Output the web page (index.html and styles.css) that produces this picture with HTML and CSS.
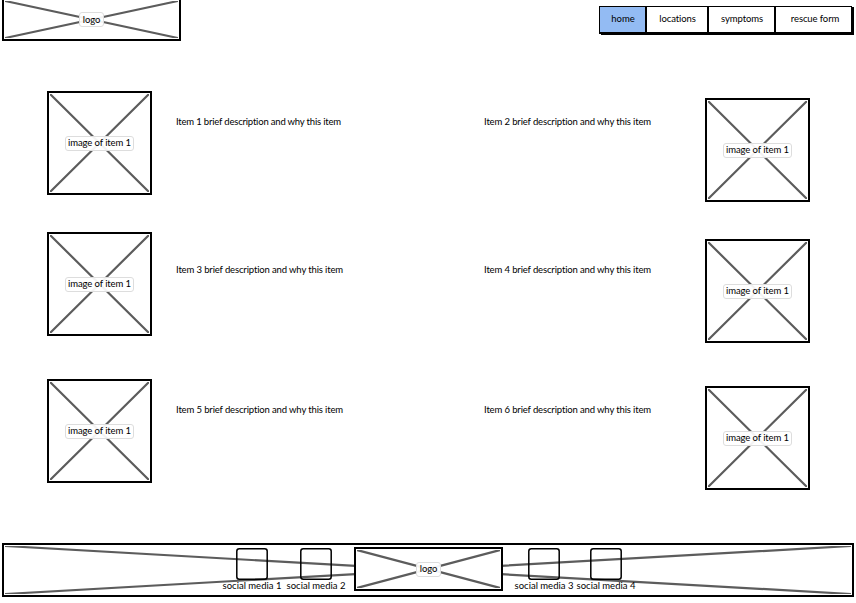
FILE: index.html
```
<!DOCTYPE html>
<html lang="en">
<head>
<meta charset="utf-8">
<title>Home</title>
<link rel="stylesheet" href="styles.css">
</head>
<body>
<header class="top">
  <div class="frame brand"><svg class="cross" viewBox="0 0 100 100" preserveAspectRatio="none"><path d="M0 0L100 100M100 0L0 100"/></svg><span class="tag logo-tag">logo</span></div>
  <nav class="nav">
    <a class="tab home active"><span>home</span></a>
    <a class="tab locations"><span>locations</span></a>
    <a class="tab symptoms"><span>symptoms</span></a>
    <a class="tab rescue"><span>rescue form</span></a>
  </nav>
</header>
<main class="items">
  <section class="row first">
    <div class="frame photo"><svg class="cross" viewBox="0 0 100 100" preserveAspectRatio="none"><path d="M0 0L100 100M100 0L0 100"/></svg><span class="tag">image of item 1</span></div>
    <p class="desc one">Item 1 brief description and why this item</p>
    <p class="desc right">Item 2 brief description and why this item</p>
    <div class="frame photo low"><svg class="cross" viewBox="0 0 100 100" preserveAspectRatio="none"><path d="M0 0L100 100M100 0L0 100"/></svg><span class="tag">image of item 1</span></div>
  </section>
  <section class="row second">
    <div class="frame photo"><svg class="cross" viewBox="0 0 100 100" preserveAspectRatio="none"><path d="M0 0L100 100M100 0L0 100"/></svg><span class="tag">image of item 1</span></div>
    <p class="desc">Item 3 brief description and why this item</p>
    <p class="desc right">Item 4 brief description and why this item</p>
    <div class="frame photo low"><svg class="cross" viewBox="0 0 100 100" preserveAspectRatio="none"><path d="M0 0L100 100M100 0L0 100"/></svg><span class="tag">image of item 1</span></div>
  </section>
  <section class="row third">
    <div class="frame photo"><svg class="cross" viewBox="0 0 100 100" preserveAspectRatio="none"><path d="M0 0L100 100M100 0L0 100"/></svg><span class="tag">image of item 1</span></div>
    <p class="desc">Item 5 brief description and why this item</p>
    <p class="desc right">Item 6 brief description and why this item</p>
    <div class="frame photo low"><svg class="cross" viewBox="0 0 100 100" preserveAspectRatio="none"><path d="M0 0L100 100M100 0L0 100"/></svg><span class="tag">image of item 1</span></div>
  </section>
</main>
<footer class="frame bottom">
  <svg class="cross" viewBox="0 0 100 100" preserveAspectRatio="none"><path d="M0 0L100 100M100 0L0 100"/></svg>
  <div class="social"><svg class="box" viewBox="0 0 32 32"><rect x=".8" y=".8" width="30.4" height="30.4" rx="2.5"/></svg><span>social media 1</span></div>
  <div class="social"><svg class="box" viewBox="0 0 32 32"><rect x=".8" y=".8" width="30.4" height="30.4" rx="2.5"/></svg><span>social media 2</span></div>
  <div class="frame foot-logo"><svg class="cross" viewBox="0 0 100 100" preserveAspectRatio="none"><path d="M0 0L100 100M100 0L0 100"/></svg><span class="tag logo-tag">logo</span></div>
  <div class="social"><svg class="box" viewBox="0 0 32 32"><rect x=".8" y=".8" width="30.4" height="30.4" rx="2.5"/></svg><span>social media 3</span></div>
  <div class="social last"><svg class="box" viewBox="0 0 32 32"><rect x=".8" y=".8" width="30.4" height="30.4" rx="2.5"/></svg><span>social media 4</span></div>
</footer>
</body>
</html>
```
FILE: styles.css
```
* { box-sizing: border-box; }
body {
  margin: 0;
  width: 856px;
  height: 603px;
  overflow: hidden;
  background: #fff;
  color: #000;
  font: 9.5px/12px Lato, sans-serif;
  white-space: nowrap;
}
.frame {
  position: relative;
  display: flex;
  align-items: center;
  justify-content: center;
  border: 2px solid #000;
  background: #fff;
}
/* Diagonals of a picture placeholder, behind its contents */
.cross {
  position: absolute;
  inset: 1px;
  width: calc(100% - 2px);
  height: calc(100% - 2px);
}
.cross path {
  fill: none;
  stroke: #5c5c5c;
  stroke-width: 2.2px;
  vector-effect: non-scaling-stroke;
}
.tag {
  position: relative;
  display: flex;
  align-items: center;
  justify-content: center;
  width: 69px;
  height: 15px;
  border: 1px solid #ddd;
  border-radius: 3px;
  background: rgba(255, 255, 255, .93);
  letter-spacing: -.1px;
}
.logo-tag { width: 25px; }
.top {
  display: flex;
  justify-content: space-between;
  height: 91px;
  padding: 0 4px 0 2px;
}
.brand { width: 179px; height: 43px; margin-top: -2px; }
.nav {
  display: flex;
  height: 28px;
  margin-top: 6px;
  border: 1px solid #000;
  border-bottom-width: 2px;
  box-shadow: 2px 1px 0 #000;
}
.tab {
  display: flex;
  align-items: center;
  justify-content: center;
  padding: 0 0 1px 1px;
  border-right: 2px solid #000;
  letter-spacing: -.1px;
}
.tab:last-child { border-right: 0; padding-left: 3px; }
.active { background: #93bbf3; letter-spacing: 0; }
.home { width: 47px; }
.locations { width: 62px; }
.symptoms { width: 67px; }
.rescue { width: 75px; }
.row {
  display: flex;
  align-items: flex-start;
  padding: 0 46px 0 47px;
}
.first { height: 141px; }
.second { height: 147px; }
.third { height: 164px; }
.photo { width: 105px; height: 104px; }
.low { margin: 7px 0 0 auto; }
.desc {
  width: 180px;
  margin: 25px 0 0 24px;
  letter-spacing: -.14px;
}
.desc.one { letter-spacing: -.19px; }
.desc.right { margin-left: 128px; }
.second .desc { margin-top: 32px; }
.bottom {
  align-items: flex-start;
  justify-content: flex-start;
  width: 852px;
  height: 54px;
  margin-left: 2px;
  padding: 3px 0 0 218px;
}
.social {
  position: relative;
  display: flex;
  flex-direction: column;
  align-items: center;
  width: 60px;
  margin-right: 4px;
}
.box {
  width: 32px;
  height: 32px;
}
.box rect {
  fill: none;
  stroke: #000;
  stroke-width: 1.5px;
}
.foot-logo {
  width: 149px;
  height: 44px;
  margin: -1px 11px 0 4px;
}
.social + .social.last { margin-left: -2px; }
```
